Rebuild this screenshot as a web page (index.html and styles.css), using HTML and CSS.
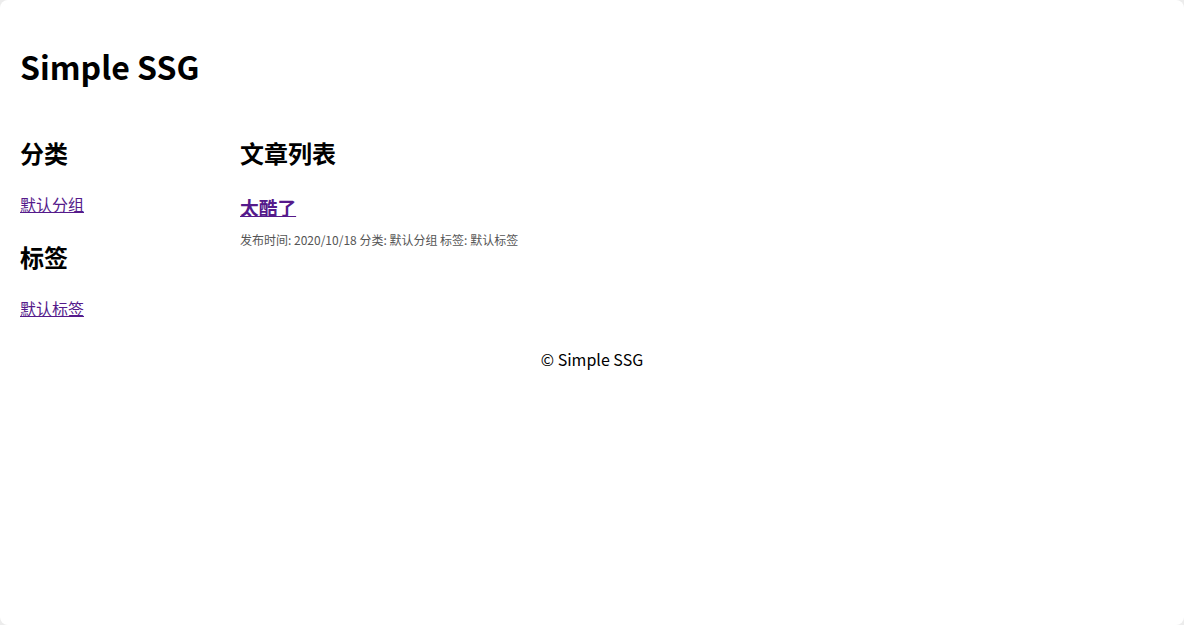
FILE: index.html
```html
<!DOCTYPE html>
<html lang="zh-CN">
<head>
<meta charset="utf-8">
<title>Simple SSG</title>
<link rel="stylesheet" href="styles.css">
</head>
<body>
<div class="page">
  <header class="site-header">
    <h1 class="site-title">Simple SSG</h1>
  </header>
  <div class="layout">
    <aside class="sidebar">
      <h2 class="side-title">分类</h2>
      <p class="side-item"><a href="#">默认分组</a></p>
      <h2 class="side-title">标签</h2>
      <p class="side-item"><a href="#">默认标签</a></p>
    </aside>
    <main class="content">
      <h2 class="content-title">文章列表</h2>
      <article class="post">
        <h3 class="post-title"><a href="#">太酷了</a></h3>
        <div class="post-meta">发布时间: 2020/10/18 分类: 默认分组 标签: 默认标签</div>
      </article>
    </main>
  </div>
  <footer class="site-footer">© Simple SSG</footer>
</div>
</body>
</html>
```
FILE: styles.css
```css
html {
  background: #ececec;
  height: 100%;
}
body {
  margin: 0;
  height: 100%;
  font-family: "Noto Sans CJK SC", "Noto Sans", sans-serif;
  line-height: 1.6;
  color: #000;
}
.page {
  background: #fff;
  height: 100%;
  border-radius: 8px;
  padding: 20px;
  box-sizing: border-box;
}
a {
  color: #551a8b;
}
.site-title {
  font-size: 32px;
  margin: 21.4px 0;
}
.layout {
  display: flex;
}
.sidebar {
  width: 220px;
  flex-shrink: 0;
}
.side-title, .content-title {
  font-size: 24px;
  margin: 19.9px 0;
}
.side-item {
  font-size: 16px;
  margin: 16px 0;
}
.content {
  flex: 1;
}
.post-title {
  font-size: 18.72px;
  margin: 18.72px 0 8.4px;
}
.post-meta {
  font-size: 12px;
  color: #555;
}
.site-footer {
  text-align: center;
  font-size: 16px;
  margin-top: 9.4px;
}
```
